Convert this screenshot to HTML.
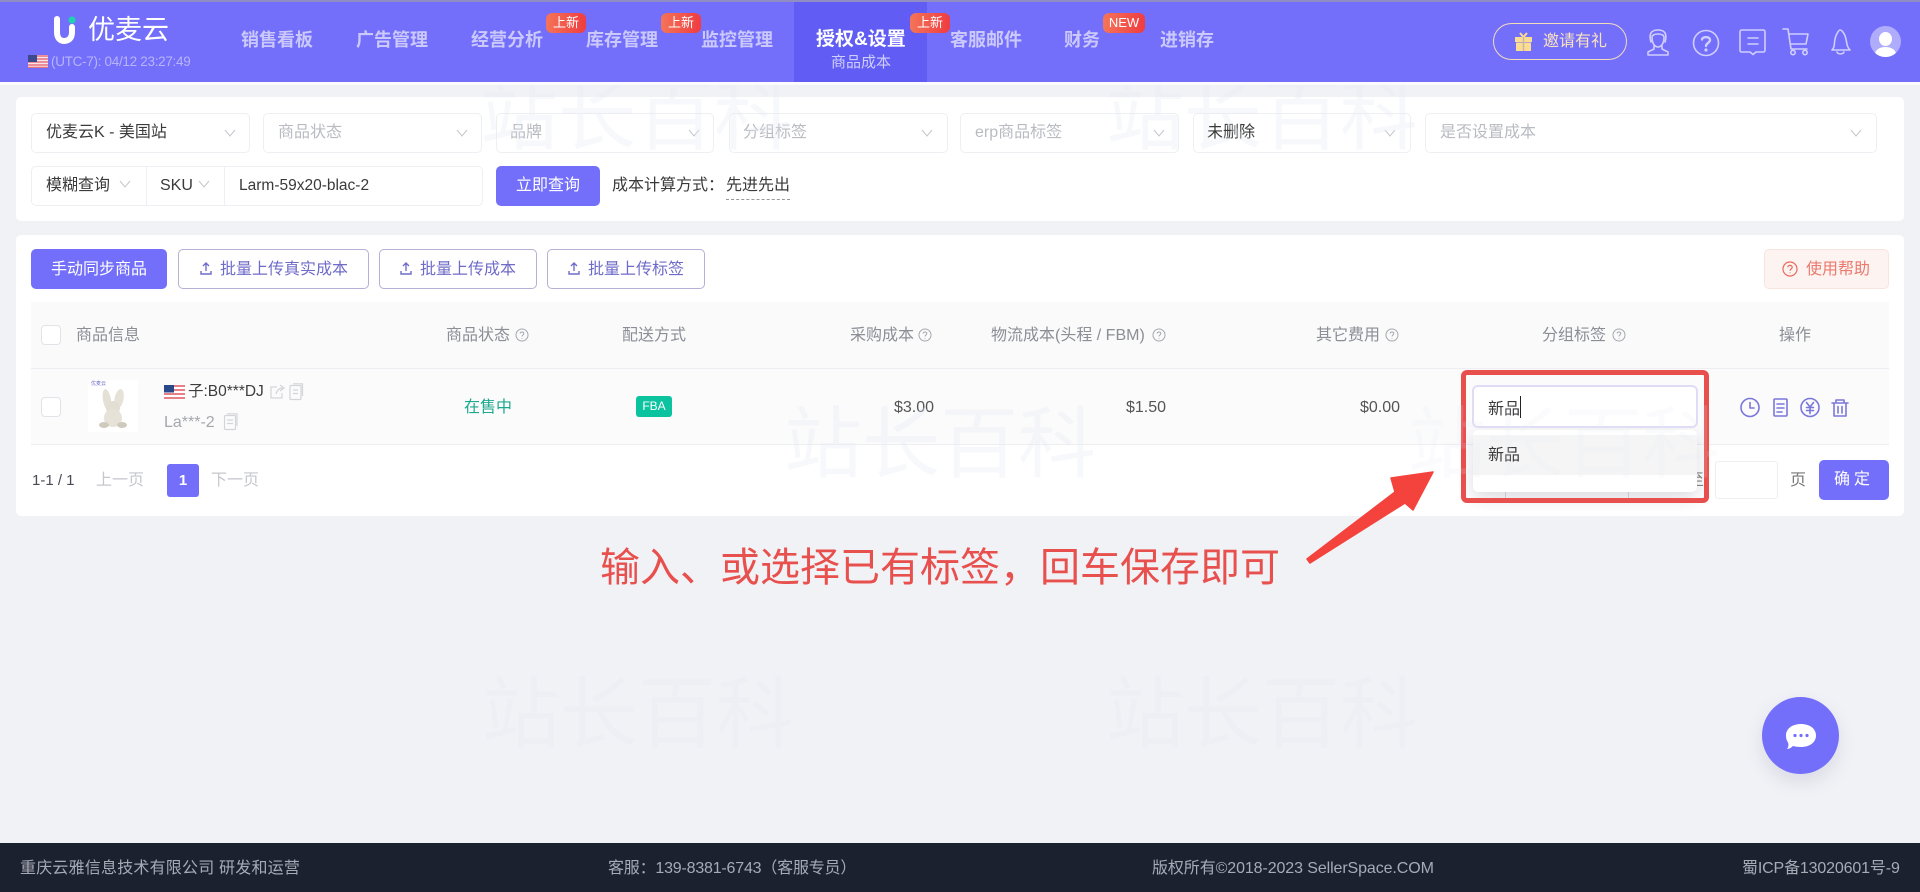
<!DOCTYPE html>
<html lang="zh-CN">
<head>
<meta charset="utf-8">
<title>优麦云 - 商品成本</title>
<style>
html,body{margin:0;padding:0;width:1920px;height:892px;overflow:hidden;background:#f1f2f6}
body{position:relative;font-family:"Liberation Sans","Noto Sans CJK SC",sans-serif;font-size:16px;color:#333}
div,span,svg{box-sizing:border-box}
.a{position:absolute}
.t{position:absolute;white-space:nowrap;line-height:24px;height:24px}
.nav{font-weight:700;font-size:18px;color:#cbc9fc;top:28px}
.badge{position:absolute;top:13px;height:20px;width:40px;border-radius:6px;background:linear-gradient(90deg,#f47458,#f03c40);color:#fff;font-size:13px;line-height:20px;text-align:center}
.sel{position:absolute;height:40px;top:113px;background:#fff;border:1px solid #eeeff3;border-radius:5px}
.ph{color:#b9bbc2}
.chev{position:absolute;width:12px;height:8px}
.h{color:#8c8e96;top:324px}
.q{position:absolute;top:328px;width:14px;height:14px}
.btn{position:absolute;top:249px;height:40px;border:1px solid #b3b1d8;border-radius:5px;background:#fff;color:#6f6cc8;line-height:40px;white-space:nowrap}
.cb{position:absolute;left:41px;width:20px;height:20px;border:1px solid #e2e3e8;border-radius:4px;background:#fff}
.wm{position:absolute;font-size:78px;line-height:80px;height:80px;white-space:nowrap;color:#e7ebf3;opacity:.32;font-weight:400;z-index:50;pointer-events:none;font-family:"Noto Sans CJK SC",sans-serif}
.ft{position:absolute;top:857px;color:#a7abb6;font-size:16px;line-height:24px;white-space:nowrap}
</style>
</head>
<body>

<!-- Header -->
<div class="a" style="left:0;top:0;width:1920px;height:82px;background:#736ffa"></div>
<div class="a" style="left:0;top:0;width:1920px;height:2px;background:#8f8dc4"></div>
<div class="a" style="left:0;top:82px;width:1920px;height:3px;background:#fbfbfe"></div>
<div class="a" style="left:794px;top:2px;width:133px;height:80px;background:#615df4"></div>

<!-- Logo -->
<svg class="a" style="left:52px;top:15px" width="27" height="30" viewBox="0 0 27 30">
  <path d="M5 4V17C5 23 8 26 12 26C17 26 20 23 20 17V12" fill="none" stroke="#fff" stroke-width="6" stroke-linecap="round"/>
  <circle cx="20" cy="5" r="3.6" fill="#1fd0b4"/>
</svg>
<span class="t" style="left:88px;top:17px;font-size:27px;line-height:27px;height:27px;color:#fff">优麦云</span>
<svg class="a" style="left:28px;top:55px" width="20" height="13" viewBox="0 0 20 13">
  <rect width="20" height="13" fill="#f4e6ea"/>
  <path d="M0 1H20M0 4H20M0 7H20M0 10H20M0 12.5H20" stroke="#e8707c" stroke-width="1.4"/>
  <rect width="9" height="7" fill="#3b4a8c"/>
</svg>
<span class="t" style="left:51px;top:50px;font-size:13.500px;letter-spacing:-.3px;color:#b7b4fb">(UTC-7): 04/12 23:27:49</span>

<!-- Nav -->
<span class="t nav" style="left:241px">销售看板</span>
<span class="t nav" style="left:356px">广告管理</span>
<span class="t nav" style="left:471px">经营分析</span>
<span class="t nav" style="left:586px">库存管理</span>
<span class="t nav" style="left:701px">监控管理</span>
<span class="t nav" style="left:816px;color:#fff;font-size:19px">授权&amp;设置</span>
<span class="t" style="left:831px;top:51px;font-size:15px;color:#cfcdfc">商品成本</span>
<span class="t nav" style="left:950px">客服邮件</span>
<span class="t nav" style="left:1064px">财务</span>
<span class="t nav" style="left:1160px">进销存</span>
<span class="badge" style="left:546px">上新</span>
<span class="badge" style="left:661px">上新</span>
<span class="badge" style="left:910px">上新</span>
<span class="badge" style="left:1103px;width:42px">NEW</span>

<!-- Header right -->
<div class="a" style="left:1493px;top:23px;width:134px;height:37px;border:1px solid #f2dcbc;border-radius:19px"></div>
<svg class="a" style="left:1515px;top:32px" width="17" height="19" viewBox="0 0 17 19">
  <path d="M5 1L8.5 5L12 1" fill="none" stroke="#fbdc93" stroke-width="2"/>
  <rect x="0" y="5" width="17" height="5" fill="#fbdc93"/>
  <rect x="1" y="10.500" width="15" height="8.500" fill="#fbdc93"/>
  <rect x="7.800" y="5" width="1.400" height="14" fill="#c9b5a0"/>
</svg>
<span class="t" style="left:1543px;top:30px;color:#fbe3bf">邀请有礼</span>
<svg class="a" style="left:1645px;top:27px" width="265" height="32" viewBox="0 0 265 32" fill="none" stroke="#d0cefd" stroke-width="1.600" stroke-linecap="round" stroke-linejoin="round">
  <!-- headset/person -->
  <path d="M6 15C3 5 8 3 13 3C18 3 23 5 20 15"/>
  <path d="M7 10C7 17 10 20 13 20C16 20 19 17 19 10C19 6 7 6 7 10Z"/>
  <path d="M9 19L9 22L3 25V28H23V25L17 22V19"/>
  <!-- help -->
  <circle cx="61" cy="16" r="12.5"/>
  <path d="M57 12.5C57 9.5 65 9 65 13C65 16 61 16 61 19" stroke-width="2.400"/>
  <circle cx="61" cy="23" r=".8" stroke-width="1.600"/>
  <!-- chat note -->
  <path d="M97 3H118C119.500 3 120 3.500 120 5V23C120 24.500 119.500 25 118 25H111L108 27.500L105 25H97C95.500 25 95 24.500 95 23V5C95 3.500 95.500 3 97 3Z"/>
  <path d="M103 11H113M103 17H113"/>
  <!-- cart -->
  <path d="M138 2H143L146 22H162"/>
  <path d="M144 7H163L161 17H146"/>
  <circle cx="148" cy="25.500" r="2.200"/>
  <circle cx="160" cy="25.500" r="2.200"/>
  <!-- bell -->
  <path d="M187 23C190 20 189 17 190 12C191 7 194 3 195 3C197 3 200 7 201 12C202 17 202 20 205 23Z"/>
  <path d="M192 25C193 27.500 198 27.500 199 25"/>
</svg>
<div class="a" style="left:1870px;top:26px;width:31px;height:31px;border-radius:50%;background:#aeacfb;overflow:hidden">
  <div class="a" style="left:9px;top:6px;width:13px;height:14px;border-radius:50%;background:#fff"></div>
  <div class="a" style="left:5px;top:21px;width:21px;height:14px;border-radius:50%;background:#fff"></div>
</div>

<!-- Filter card -->
<div class="a" style="left:16px;top:97px;width:1888px;height:124px;background:#fff;border-radius:5px"></div>
<div class="sel" style="left:31px;width:219px"></div>
<div class="sel" style="left:263px;width:219px"></div>
<div class="sel" style="left:496px;width:218px"></div>
<div class="sel" style="left:729px;width:219px"></div>
<div class="sel" style="left:960px;width:219px"></div>
<div class="sel" style="left:1193px;width:218px"></div>
<div class="sel" style="left:1425px;width:452px"></div>
<span class="t" style="left:46px;top:121px;color:#3a3a3a">优麦云K - 美国站</span>
<span class="t ph" style="left:278px;top:121px">商品状态</span>
<span class="t ph" style="left:510px;top:121px">品牌</span>
<span class="t ph" style="left:743px;top:121px">分组标签</span>
<span class="t ph" style="left:975px;top:121px">erp商品标签</span>
<span class="t" style="left:1207px;top:121px;color:#3a3a3a">未删除</span>
<span class="t ph" style="left:1440px;top:121px">是否设置成本</span>
<svg class="chev" style="left:224px;top:129px" viewBox="0 0 12 8"><path d="M1 1L6 7L11 1" fill="none" stroke="#c4c6cc"/></svg>
<svg class="chev" style="left:456px;top:129px" viewBox="0 0 12 8"><path d="M1 1L6 7L11 1" fill="none" stroke="#c4c6cc"/></svg>
<svg class="chev" style="left:688px;top:129px" viewBox="0 0 12 8"><path d="M1 1L6 7L11 1" fill="none" stroke="#c4c6cc"/></svg>
<svg class="chev" style="left:921px;top:129px" viewBox="0 0 12 8"><path d="M1 1L6 7L11 1" fill="none" stroke="#c4c6cc"/></svg>
<svg class="chev" style="left:1153px;top:129px" viewBox="0 0 12 8"><path d="M1 1L6 7L11 1" fill="none" stroke="#c4c6cc"/></svg>
<svg class="chev" style="left:1384px;top:129px" viewBox="0 0 12 8"><path d="M1 1L6 7L11 1" fill="none" stroke="#c4c6cc"/></svg>
<svg class="chev" style="left:1850px;top:129px" viewBox="0 0 12 8"><path d="M1 1L6 7L11 1" fill="none" stroke="#c4c6cc"/></svg>

<div class="a" style="left:31px;top:166px;width:452px;height:40px;border:1px solid #eeeff3;border-radius:5px;background:#fff"></div>
<div class="a" style="left:146px;top:167px;width:1px;height:38px;background:#eeeff3"></div>
<div class="a" style="left:224px;top:167px;width:1px;height:38px;background:#eeeff3"></div>
<span class="t" style="left:46px;top:174px;color:#3a3a3a">模糊查询</span>
<svg class="chev" style="left:119px;top:180px" viewBox="0 0 12 8"><path d="M1 1L6 7L11 1" fill="none" stroke="#c4c6cc"/></svg>
<span class="t" style="left:160px;top:174px;color:#3a3a3a">SKU</span>
<svg class="chev" style="left:198px;top:180px" viewBox="0 0 12 8"><path d="M1 1L6 7L11 1" fill="none" stroke="#c4c6cc"/></svg>
<span class="t" style="left:239px;top:174px;font-size:15.500px;color:#3a3a3a">Larm-59x20-blac-2</span>
<div class="a" style="left:496px;top:166px;width:104px;height:40px;border-radius:5px;background:#736ffa;color:#fff;text-align:center;line-height:40px">立即查询</div>
<span class="t" style="left:612px;top:174px;color:#3a3a3a">成本计算方式：</span>
<span class="t" style="left:726px;top:174px;color:#3a3a3a;border-bottom:1px dashed #999;height:26px">先进先出</span>

<!-- Table card -->
<div class="a" style="left:16px;top:235px;width:1888px;height:281px;background:#fff;border-radius:5px"></div>
<div class="a" style="left:31px;top:249px;width:136px;height:40px;border-radius:5px;background:#736ffa;color:#fff;text-align:center;line-height:41px">手动同步商品</div>
<div class="btn" style="left:178px;width:191px;padding-left:41px">批量上传真实成本</div>
<div class="btn" style="left:379px;width:158px;padding-left:40px">批量上传成本</div>
<div class="btn" style="left:547px;width:158px;padding-left:40px">批量上传标签</div>
<svg class="a" style="left:199px;top:261px" width="14" height="15" viewBox="0 0 14 15" fill="none" stroke="#6f6cc8" stroke-width="1.400"><path d="M4 5L7 2L10 5M7 2V10M2 10V13H12V10"/></svg>
<svg class="a" style="left:399px;top:261px" width="14" height="15" viewBox="0 0 14 15" fill="none" stroke="#6f6cc8" stroke-width="1.400"><path d="M4 5L7 2L10 5M7 2V10M2 10V13H12V10"/></svg>
<svg class="a" style="left:567px;top:261px" width="14" height="15" viewBox="0 0 14 15" fill="none" stroke="#6f6cc8" stroke-width="1.400"><path d="M4 5L7 2L10 5M7 2V10M2 10V13H12V10"/></svg>
<div class="a" style="left:1764px;top:249px;width:125px;height:40px;border:1px solid #f8e4df;border-radius:5px;background:#fdf3f0;color:#ea7a6e;line-height:39px;padding-left:41px;white-space:nowrap;font-size:16px">使用帮助</div>
<svg class="a" style="left:1782px;top:261px" width="16" height="16" viewBox="0 0 16 16" fill="none" stroke="#ea6a5e" stroke-width="1.200"><circle cx="8" cy="8" r="7"/><path d="M5.800 6.200C5.800 3.800 10.200 3.800 10.200 6.200C10.200 8 8 8 8 9.800M8 11.500V12.300"/></svg>

<div class="a" style="left:31px;top:302px;width:1858px;height:66px;background:#fafafb"></div>
<div class="a" style="left:31px;top:368px;width:1858px;height:1px;background:#eeeef2"></div>
<div class="a" style="left:31px;top:369px;width:1858px;height:75px;background:#fbfbfc"></div>
<div class="a" style="left:31px;top:444px;width:1858px;height:1px;background:#eeeef2"></div>
<div class="cb" style="top:325px"></div>
<div class="cb" style="top:397px"></div>

<span class="t h" style="left:76px">商品信息</span>
<span class="t h" style="left:446px">商品状态</span>
<span class="t h" style="left:622px">配送方式</span>
<span class="t h" style="left:850px">采购成本</span>
<span class="t h" style="left:991px">物流成本(头程 / FBM)</span>
<span class="t h" style="left:1316px">其它费用</span>
<span class="t h" style="left:1542px">分组标签</span>
<span class="t h" style="left:1779px">操作</span>
<svg class="q" style="left:515px" viewBox="0 0 14 14" fill="none" stroke="#a5a7ae"><circle cx="7" cy="7" r="6"/><path d="M5.200 5.500C5.200 3.500 8.800 3.500 8.800 5.500C8.800 7 7 7 7 8.500M7 10V10.800"/></svg>
<svg class="q" style="left:918px" viewBox="0 0 14 14" fill="none" stroke="#a5a7ae"><circle cx="7" cy="7" r="6"/><path d="M5.200 5.500C5.200 3.500 8.800 3.500 8.800 5.500C8.800 7 7 7 7 8.500M7 10V10.800"/></svg>
<svg class="q" style="left:1152px" viewBox="0 0 14 14" fill="none" stroke="#a5a7ae"><circle cx="7" cy="7" r="6"/><path d="M5.200 5.500C5.200 3.500 8.800 3.500 8.800 5.500C8.800 7 7 7 7 8.500M7 10V10.800"/></svg>
<svg class="q" style="left:1385px" viewBox="0 0 14 14" fill="none" stroke="#a5a7ae"><circle cx="7" cy="7" r="6"/><path d="M5.200 5.500C5.200 3.500 8.800 3.500 8.800 5.500C8.800 7 7 7 7 8.500M7 10V10.800"/></svg>
<svg class="q" style="left:1612px" viewBox="0 0 14 14" fill="none" stroke="#a5a7ae"><circle cx="7" cy="7" r="6"/><path d="M5.200 5.500C5.200 3.500 8.800 3.500 8.800 5.500C8.800 7 7 7 7 8.500M7 10V10.800"/></svg>

<!-- Row -->
<div class="a" style="left:88px;top:380px;width:50px;height:52px;background:#fff"></div>
<span class="t" style="left:91px;top:380px;font-size:5px;line-height:8px;height:8px;color:#6f6cc8">优麦云</span>
<svg class="a" style="left:96px;top:388px" width="36" height="42" viewBox="0 0 36 42">
  <ellipse cx="11" cy="12" rx="4" ry="11" fill="#e4e0d6" transform="rotate(-10 11 12)"/>
  <ellipse cx="23" cy="11" rx="4.500" ry="10" fill="#e6e2d8" transform="rotate(12 23 11)"/>
  <circle cx="17" cy="20" r="7" fill="#e2ded3"/>
  <ellipse cx="17" cy="30" rx="9" ry="9" fill="#e6e2d8"/>
  <ellipse cx="8" cy="37" rx="5" ry="3" fill="#cfcabd"/>
  <ellipse cx="26" cy="37" rx="5" ry="3" fill="#cfcabd"/>
</svg>
<svg class="a" style="left:164px;top:385px" width="21" height="14" viewBox="0 0 21 14">
  <rect width="21" height="14" fill="#fff"/>
  <path d="M0 1H21M0 5H21M0 9H21M0 13H21" stroke="#dd5560" stroke-width="1.600"/>
  <rect width="10" height="7.500" fill="#28488a"/>
</svg>
<span class="t" style="left:188px;top:380px;font-size:15.500px;color:#3d3d3d">子:B0***DJ</span>
<svg class="a" style="left:269px;top:383px" width="36" height="18" viewBox="0 0 36 18" fill="none" stroke="#d4d5da" stroke-width="1.200">
  <path d="M8 4H2V15H13V10M7 11C8 7 10 5 14 5M11 2L15 5L11 8"/>
  <rect x="21" y="2.500" width="11" height="14" rx="1"/>
  <path d="M24 .8H33.500V13M24 7H29M24 10.500H29"/>
</svg>
<span class="t" style="left:164px;top:411px;font-size:16px;color:#a5a7ae">La***-2</span>
<svg class="a" style="left:223px;top:413px" width="16" height="18" viewBox="0 0 16 18" fill="none" stroke="#d4d5da" stroke-width="1.200">
  <rect x="1.500" y="2.500" width="11" height="14" rx="1"/>
  <path d="M4 .8H14V13M4 7H10M4 10.500H10"/>
</svg>
<span class="t" style="left:464px;top:396px;color:#1ea98e">在售中</span>
<div class="a" style="left:636px;top:396px;width:36px;height:21px;border-radius:3px;background:#0cc3a0;color:#fff;font-size:12px;line-height:21px;text-align:center">FBA</div>
<span class="t" style="right:986px;top:396px;color:#555">$3.00</span>
<span class="t" style="right:754px;top:396px;color:#555">$1.50</span>
<span class="t" style="right:520px;top:396px;color:#555">$0.00</span>

<svg class="a" style="left:1740px;top:397px" width="110" height="21" viewBox="0 0 110 21" fill="none" stroke="#7a77db" stroke-width="1.600" stroke-linecap="round" stroke-linejoin="round">
  <circle cx="10" cy="10.500" r="9"/><path d="M10 5.500V11H14"/>
  <rect x="34" y="2" width="13" height="17" rx="1"/><path d="M37 7H44M37 11H44M37 15H42"/>
  <circle cx="70" cy="10.500" r="9"/><path d="M66.500 5.500L70 10L73.500 5.500M66.500 10.500H73.500M66.500 13.500H73.500M70 10V16.500"/>
  <path d="M92 6H108M96 6V3H104V6M94 6V19H106V6M98 9.500V16M102 9.500V16"/>
</svg>

<!-- Pagination -->
<span class="t" style="left:32px;top:469px;font-size:15px;color:#4a4a55">1-1 / 1</span>
<span class="t" style="left:96px;top:469px;color:#c6c7cc">上一页</span>
<div class="a" style="left:167px;top:464px;width:32px;height:33px;border-radius:3px;background:#736ffa;color:#fff;font-weight:700;font-size:15px;line-height:34px;text-align:center">1</div>
<span class="t" style="left:211px;top:469px;color:#c6c7cc">下一页</span>
<span class="t" style="left:1688px;top:469px;color:#888">至</span>
<div class="a" style="left:1715px;top:461px;width:63px;height:38px;background:#fff;border:1px solid #eeeef2;border-radius:3px"></div>
<span class="t" style="left:1790px;top:469px;color:#777">页</span>
<div class="a" style="left:1819px;top:460px;width:70px;height:40px;border-radius:5px;background:#736ffa;color:#fff;line-height:40px;text-align:center;letter-spacing:4px">确定</div>
<div class="a" style="left:1505px;top:488px;width:1px;height:12px;background:#dcdce2"></div>
<div class="a" style="left:1628px;top:488px;width:1px;height:12px;background:#dcdce2"></div>

<!-- Dropdown + input -->
<div class="a" style="left:1473px;top:430px;width:224px;height:62px;background:#fff;border-radius:5px;box-shadow:0 6px 16px rgba(40,40,70,.16);z-index:5"></div>
<div class="a" style="left:1473px;top:435px;width:224px;height:40px;background:#f5f5f6;z-index:6"></div>
<span class="t" style="left:1488px;top:444px;z-index:7;color:#3a3a3a">新品</span>
<div class="a" style="left:1472px;top:385px;width:226px;height:43px;background:#fff;border:2px solid #dfddf6;border-radius:6px;z-index:6"></div>
<span class="t" style="left:1488px;top:398px;z-index:7;color:#3a3a3a">新品</span>
<div class="a" style="left:1520px;top:396px;width:1px;height:22px;background:#222;z-index:7"></div>
<div class="a" style="left:1461px;top:370px;width:248px;height:133px;border:5px solid #e8504e;border-radius:6px;z-index:8"></div>

<!-- Annotation -->
<span class="t" style="left:600px;top:540px;height:48px;line-height:48px;font-size:40px;color:#e8504e;z-index:9;font-family:'Noto Sans CJK SC',sans-serif">输入、或选择已有标签，回车保存即可</span>
<svg class="a" style="left:1300px;top:465px;z-index:9" width="140" height="105" viewBox="1300 465 140 105">
  <polygon points="1307,559 1395,492 1391,478 1433,472 1413,510 1405,503 1310,563" fill="#f4423c" stroke="#f4423c" stroke-width="1.500" stroke-linejoin="round"/>
</svg>

<!-- Watermarks -->
<div class="a" style="left:0;top:85px;width:1920px;height:90px;overflow:hidden;z-index:50;pointer-events:none">
  <span class="wm" style="left:480px;top:-15px">站长百科</span>
  <span class="wm" style="left:1106px;top:-15px">站长百科</span>
</div>
<span class="wm" style="left:784px;top:398px">站长百科</span>
<span class="wm" style="left:1408px;top:398px;opacity:.15">站长百科</span>
<span class="wm" style="left:482px;top:668px">站长百科</span>
<span class="wm" style="left:1106px;top:668px">站长百科</span>

<!-- Chat bubble -->
<div class="a" style="left:1762px;top:697px;width:77px;height:77px;border-radius:50%;background:#736ffa;box-shadow:0 8px 18px rgba(100,100,140,.16);z-index:60"></div>
<svg class="a" style="left:1785px;top:722px;z-index:61" width="32" height="30" viewBox="0 0 32 30">
  <path d="M16 2C24.500 2 31 6.500 31 13.500C31 20.500 24.500 25 16 25C13 25 10 24.500 8 24C6.500 25.500 4 27 2 27C4 24.500 3.500 22 3 20.500C1.500 18.500 1 16 1 13.500C1 6.500 7.500 2 16 2Z" fill="#fff"/>
  <circle cx="10" cy="13.500" r="1.600" fill="#736ffa"/><circle cx="16" cy="13.500" r="1.600" fill="#736ffa"/><circle cx="22" cy="13.500" r="1.600" fill="#736ffa"/>
</svg>

<!-- Footer -->
<div class="a" style="left:0;top:843px;width:1920px;height:49px;background:#1c2130"></div>
<span class="ft" style="left:20px;letter-spacing:.2px">重庆云雅信息技术有限公司 研发和运营</span>
<span class="ft" style="left:608px;letter-spacing:-.2px">客服：139-8381-6743（客服专员）</span>
<span class="ft" style="left:1152px;letter-spacing:-.1px">版权所有©2018-2023 SellerSpace.COM</span>
<span class="ft" style="left:1742px;letter-spacing:-.15px">蜀ICP备13020601号-9</span>

</body>
</html>
